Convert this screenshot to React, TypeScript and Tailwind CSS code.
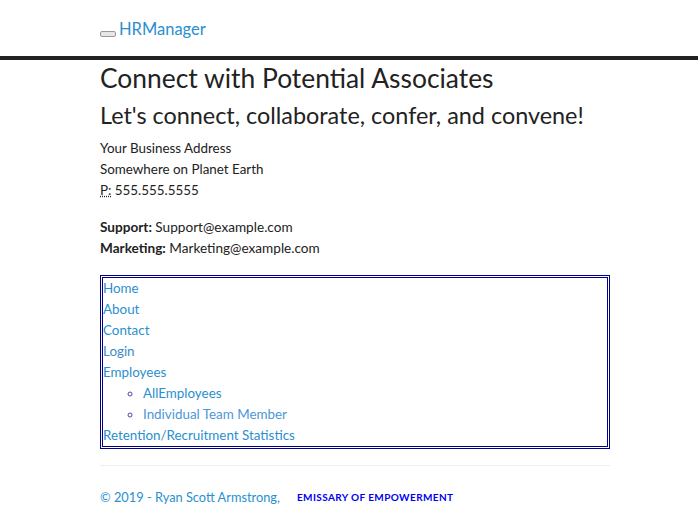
import React from "react";

export default function App() {
  const font = { fontFamily: '"Lato", "Noto Sans", sans-serif' };
  return (
    <div className="min-h-[528px] bg-white text-[#222]" style={font}>
      <header className="h-[60px] border-b-4 border-[#222] bg-white">
        <div className="ml-[100px] flex items-end pt-[17px]">
          <span className="mb-[4px] mr-[3px] inline-block h-[6px] w-[16px] rounded-[2px] border border-[#999] bg-[#e6e6e6]"></span>
          <span className="text-[16.5px] leading-[24px] text-[#2a8fcf]">HRManager</span>
        </div>
      </header>
      <main className="ml-[100px] w-[510px]">
        <h1 className="mt-[1px] text-[26.4px] leading-[34px]">Connect with Potential Associates</h1>
        <h2 className="mt-[4px] text-[23.4px] leading-[32px]">Let's connect, collaborate, confer, and convene!</h2>
        <address className="mt-[7px] text-[13.4px] not-italic leading-[21px]">
          Your Business Address<br />
          Somewhere on Planet Earth<br />
          <abbr title="Phone" className="cursor-help underline decoration-dotted">P:</abbr> 555.555.5555
        </address>
        <address className="mt-[16px] text-[13.6px] not-italic leading-[21px]">
          <strong>Support:</strong> Support@example.com<br />
          <strong>Marketing:</strong> Marketing@example.com
        </address>
        <nav className="mt-[16px] border-[3px] border-double border-[#00008b] text-[13.4px] leading-[21px] text-[#2a8fcf]">
          <ul>
            <li>Home</li>
            <li>About</li>
            <li>Contact</li>
            <li className="text-[#3b8ccc]">Login</li>
            <li>Employees</li>
            <li>
              <ul className="list-[circle] pl-[40px] text-[#4b48a8] marker:text-[#4b48a8]">
                <li><span className="text-[#2a8fcf]">AllEmployees</span></li>
                <li><span className="text-[#4a98d6]">Individual Team Member</span></li>
              </ul>
            </li>
            <li>Retention/Recruitment Statistics</li>
          </ul>
        </nav>
        <hr className="mt-[16px] border-t border-[#eee]" />
        <footer className="mt-[21px] flex items-center text-[12.8px] leading-[20px]">
          <span className="text-[#2a8fcf]">© 2019 - Ryan Scott Armstrong,</span>
          <span className="ml-[17px] text-[10px] font-bold tracking-[0.4px] text-[#0000ee]">EMISSARY OF EMPOWERMENT</span>
        </footer>
      </main>
    </div>
  );
}
